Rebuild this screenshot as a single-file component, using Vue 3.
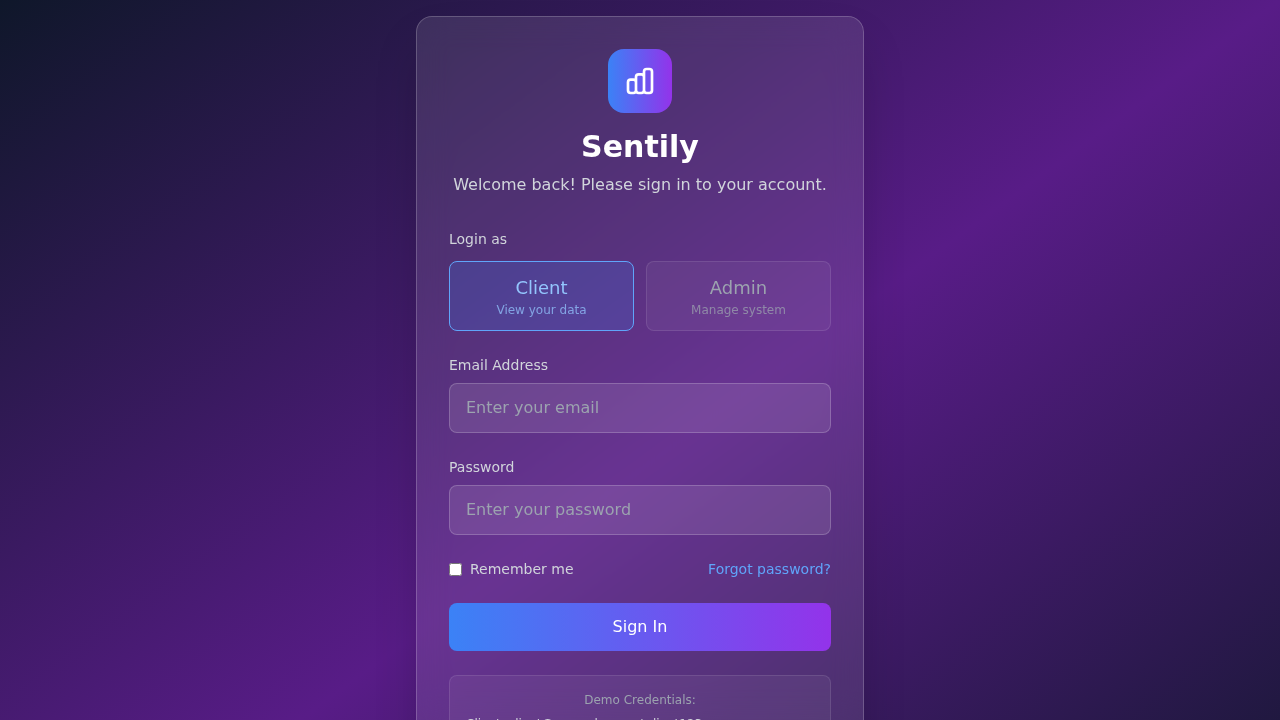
<script setup>
import { ref } from 'vue'

const loginAs = ref('client')
const roles = [
  { id: 'client', name: 'Client', hint: 'View your data' },
  { id: 'admin', name: 'Admin', hint: 'Manage system' },
]
</script>

<template>
  <div class="page">
    <main class="card">
      <header class="head">
        <div class="logo">
          <svg viewBox="0 0 24 24" fill="none" stroke="currentColor" stroke-width="2" stroke-linecap="round" stroke-linejoin="round">
            <path d="M9 19v-6a2 2 0 00-2-2H5a2 2 0 00-2 2v6a2 2 0 002 2h2a2 2 0 002-2zm0 0V9a2 2 0 012-2h2a2 2 0 012 2v10m-6 0a2 2 0 002 2h2a2 2 0 002-2m0 0V5a2 2 0 012-2h2a2 2 0 012 2v14a2 2 0 01-2 2h-2a2 2 0 01-2-2z" />
          </svg>
        </div>
        <h1>Sentily</h1>
        <p>Welcome back! Please sign in to your account.</p>
      </header>

      <div class="roles-label">Login as</div>
      <div class="roles">
        <button
          v-for="role in roles"
          :key="role.id"
          type="button"
          class="role"
          :class="{ active: loginAs === role.id }"
          @click="loginAs = role.id"
        >
          <span class="role-name">{{ role.name }}</span>
          <span class="role-hint">{{ role.hint }}</span>
        </button>
      </div>

      <form @submit.prevent>
        <label class="field">
          <span>Email Address</span>
          <input type="email" placeholder="Enter your email" />
        </label>
        <label class="field">
          <span>Password</span>
          <input type="password" placeholder="Enter your password" />
        </label>
        <div class="options">
          <label class="remember"><input type="checkbox" /><span>Remember me</span></label>
          <a href="#">Forgot password?</a>
        </div>
        <button class="submit" type="submit">Sign In</button>
      </form>

      <section class="demo">
        <p class="demo-title">Demo Credentials:</p>
        <p>Client: client@example.com / client123</p>
      </section>
    </main>
  </div>
</template>

<style>
body {
  overflow: hidden;
}
</style>

<style scoped>
* {
  box-sizing: border-box;
  margin: 0;
}
.page {
  height: 100vh;
  overflow: hidden;
  padding: 16px;
  display: flex;
  justify-content: center;
  align-items: flex-start;
  background: linear-gradient(to bottom right, #0f172a, #581c87, #0f172a) 0 0 / 100% 940px no-repeat;
  font-family: "DejaVu Sans", sans-serif;
  font-size: 16px;
  line-height: 24px;
  color: #fff;
}
.card {
  width: 448px;
  min-height: 908px;
  padding: 32px;
  border: 1px solid rgba(255, 255, 255, 0.2);
  border-radius: 16px;
  background: rgba(255, 255, 255, 0.1);
  backdrop-filter: blur(16px);
  box-shadow: 0 25px 50px -12px rgba(0, 0, 0, 0.25);
}
.head {
  text-align: center;
  margin-bottom: 32px;
}
.logo {
  width: 64px;
  height: 64px;
  margin: 0 auto 16px;
  border-radius: 16px;
  display: flex;
  align-items: center;
  justify-content: center;
  background: linear-gradient(to right, #3b82f6, #9333ea);
}
.logo svg {
  width: 32px;
  height: 32px;
}
h1 {
  font-size: 30px;
  line-height: 36px;
  font-weight: 700;
  margin-bottom: 8px;
}
.head p {
  color: #d1d5db;
}
.roles-label,
.field > span {
  display: block;
  font-size: 14px;
  line-height: 20px;
  color: #d1d5db;
}
.roles-label {
  margin-bottom: 12px;
}
.roles {
  display: grid;
  grid-template-columns: 1fr 1fr;
  gap: 12px;
  margin-bottom: 24px;
}
button,
input {
  font-family: inherit;
}
.role {
  padding: 12px;
  height: 70px;
  border: 1px solid rgba(255, 255, 255, 0.1);
  border-radius: 8px;
  background: rgba(255, 255, 255, 0.05);
  color: #9ca3af;
}
.role.active {
  border-color: #60a5fa;
  background: rgba(59, 130, 246, 0.2);
  color: #93c5fd;
}
.role-name {
  display: block;
  font-size: 18px;
  line-height: 28px;
}
.role-hint {
  display: block;
  font-size: 12px;
  line-height: 16px;
  opacity: 0.75;
}
.field {
  display: block;
  margin-bottom: 24px;
}
.field input {
  display: block;
  width: 100%;
  height: 50px;
  margin-top: 8px;
  padding: 12px 16px 13px;
  font-size: 16px;
  color: #fff;
  background: rgba(255, 255, 255, 0.1);
  border: 1px solid rgba(255, 255, 255, 0.2);
  border-radius: 8px;
}
.field input::placeholder {
  color: #9ca3af;
}
.options {
  display: flex;
  justify-content: space-between;
  align-items: center;
  font-size: 14px;
  line-height: 20px;
  margin-bottom: 24px;
}
.remember {
  display: flex;
  align-items: center;
  gap: 8px;
  color: #d1d5db;
}
.remember input {
  width: 13px;
  height: 13px;
}
.options a {
  color: #60a5fa;
  text-decoration: none;
}
.submit {
  display: block;
  width: 100%;
  height: 48px;
  border: 0;
  border-radius: 8px;
  font-size: 16px;
  line-height: 24px;
  color: #fff;
  background: linear-gradient(to right, #3b82f6, #9333ea);
}
.demo {
  margin-top: 24px;
  padding: 16px;
  border: 1px solid rgba(255, 255, 255, 0.1);
  border-radius: 8px;
  background: rgba(255, 255, 255, 0.05);
  font-size: 12px;
  line-height: 16px;
  color: #d1d5db;
  min-height: 120px;
}
.demo p + p {
  margin-top: 8px;
}
.demo .demo-title {
  text-align: center;
  color: #9ca3af;
}
</style>
